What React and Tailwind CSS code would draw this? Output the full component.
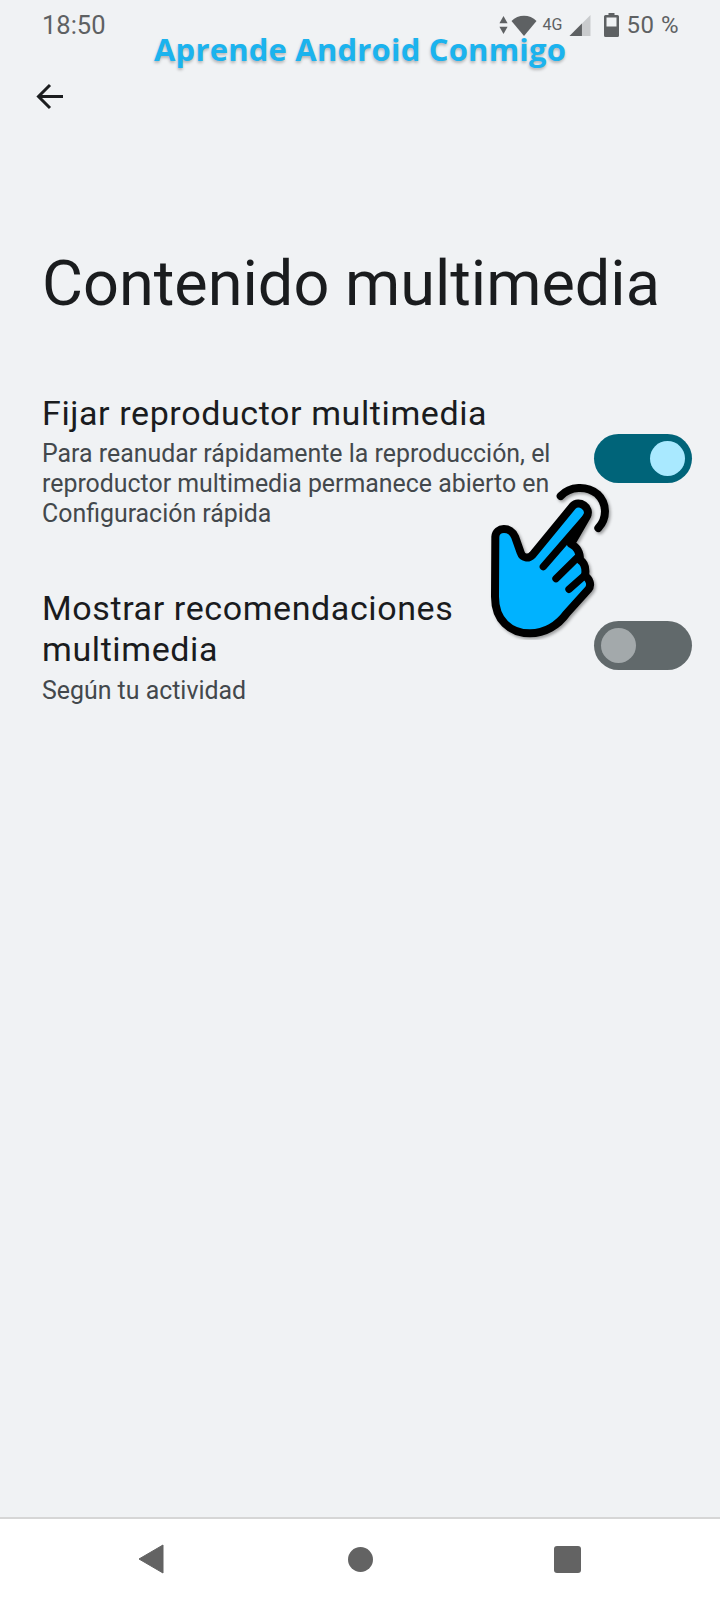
import React from "react";

const Toggle = ({ on, className }) => (
  <div className={`w-[98px] h-[49px] rounded-full flex items-center shrink-0 px-[7px] ${on ? "bg-[#006479] justify-end" : "bg-[#61696b] justify-start"} ${className}`}>
    <div className={`w-[35px] h-[35px] rounded-full ${on ? "bg-[#a9e9ff]" : "bg-[#a3a9ab]"}`} />
  </div>
);

const Hand = () => (
  <svg className="absolute left-[486px] top-[476px]" width="128" height="164" viewBox="48 168 384 492" fill="none">
    <g style={{ filter: "drop-shadow(5px 6px 5px rgba(0,0,0,0.35))" }}>
      <path
        d="M75 530 L76 350 C78 320 122 318 135 350 L152 398 C157 414 175 418 188 404 L308 258 C326 238 366 262 350 290 L303 372 C320 380 330 396 330 420 C346 430 348 450 345 468 C358 475 366 495 355 508 L290 580 C265 615 225 640 180 640 C120 640 75 600 75 530 Z"
        fill="#00b2ff"
        stroke="#000"
        strokeWidth="24"
        strokeLinejoin="round"
      />
      <path d="M220 440 L350 290" stroke="#000" strokeWidth="22" strokeLinecap="round" />
      <path d="M258 476 L325 410" stroke="#000" strokeWidth="22" strokeLinecap="round" />
      <path d="M297 508 L342 468" stroke="#000" strokeWidth="22" strokeLinecap="round" />
      <path d="M272 228 C300 198 350 196 382 222 C412 250 412 295 385 324" stroke="#000" strokeWidth="24" strokeLinecap="round" />
    </g>
  </svg>
);

export default function App() {
  return (
    <div className="relative w-[720px] h-[1599px] bg-[#f0f2f4] flex flex-col overflow-hidden font-['Roboto',sans-serif]">
      <div className="flex items-center justify-between h-[50px] pl-[42px] pr-[41px] text-[#5e6163] text-[24px]">
        <span className="text-[25.5px]">18:50</span>
        <div className="flex items-center">
          <svg width="9" height="20" viewBox="0 0 10 22" fill="#5e6163" className="mr-[3px]">
            <path d="M5 1 L9.5 9 H0.5 Z" />
            <path d="M5 21 L9.5 13 H0.5 Z" />
          </svg>
          <svg width="26" height="22" viewBox="0 0 26 22" fill="#5e6163" className="mr-[6px]">
            <path d="M13 22 L0.5 7 C7 0 19 0 25.5 7 Z" />
          </svg>
          <span className="text-[16px] mr-[7px]">4G</span>
          <svg width="22" height="21" viewBox="0 0 22 22" className="mr-[13px]">
            <path d="M22 0 V22 H0 Z" fill="#c9cbcd" />
            <path d="M13 9 V22 H0 Z" fill="#5e6163" />
          </svg>
          <svg width="15" height="24" viewBox="0 0 15 24" className="mr-[7px]">
            <path d="M4.5 0 H10.5 V2 H13.5 Q15 2 15 3.5 V22.5 Q15 24 13.5 24 H1.5 Q0 24 0 22.5 V3.5 Q0 2 1.5 2 H4.5 Z" fill="#5e6163" />
            <rect x="2.5" y="4.5" width="10" height="9" fill="#f0f2f4" />
          </svg>
          <span className="tracking-[0.5px]">50 %</span>
        </div>
      </div>

      <div className="h-[94px] pl-[36px] flex items-center">
        <svg width="28" height="28" viewBox="0 0 28 28" fill="none" stroke="#1b1d1f" strokeWidth="3">
          <path d="M27 13.5 H3" />
          <path d="M14 2 L2.5 13.5 L14 25" />
        </svg>
      </div>

      <h1 className="mt-[105px] pl-[42px] text-[63px] leading-[70px] font-normal text-[#1a1c1e]">Contenido multimedia</h1>

      <div className="mt-[73px] pl-[42px] pr-[28px] flex items-start justify-between">
        <div className="w-[520px]">
          <div className="text-[34px] leading-[42px] tracking-[0.6px] text-[#1a1c1e]">Fijar reproductor multimedia</div>
          <div className="mt-[5px] text-[24.9px] leading-[30px] text-[#43484c]">Para reanudar rápidamente la reproducción, el reproductor multimedia permanece abierto en Configuración rápida</div>
        </div>
        <Toggle on className="mt-[42px]" />
      </div>

      <div className="mt-[59px] pl-[42px] pr-[28px] flex items-start justify-between">
        <div className="w-[520px]">
          <div className="text-[34px] leading-[41px] tracking-[0.6px] text-[#1a1c1e] w-[440px]">Mostrar recomendaciones multimedia</div>
          <div className="mt-[6px] text-[24.9px] leading-[30px] text-[#43484c]">Según tu actividad</div>
        </div>
        <Toggle className="mt-[33px]" />
      </div>

      <div className="mt-auto h-[82px] bg-white border-t-2 border-[#d6d6d6] flex items-center pl-[138px]">
        <svg width="26" height="30" viewBox="0 0 26 30" fill="#636363" className="mr-[184px]">
          <path d="M1 15 L25 1 V29 Z" stroke="#636363" strokeWidth="1" strokeLinejoin="round" />
        </svg>
        <div className="w-[25px] h-[25px] rounded-full bg-[#636363] mr-[181px]" />
        <div className="w-[27px] h-[27px] rounded-[3px] bg-[#636363]" />
      </div>

      <div className="absolute left-[154px] top-[28px] text-[31px] leading-[42px] font-bold text-[#1bb3ee] font-['Open_Sans',sans-serif] tracking-[0.2px] [text-shadow:0_2px_3px_rgba(0,0,0,0.25)]">Aprende Android Conmigo</div>
      <Hand />
    </div>
  );
}
